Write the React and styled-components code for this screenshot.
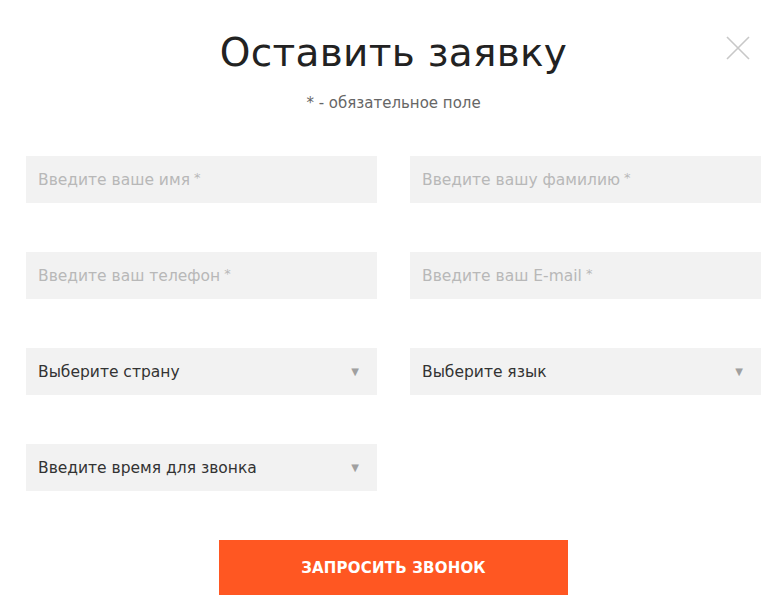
import React from "react";
import styled, { createGlobalStyle } from "styled-components";

const GlobalStyle = createGlobalStyle`
  body {
    margin: 0;
    background: #fff;
    font-family: "DejaVu Sans", "Open Sans", sans-serif;
  }
`;

const Modal = styled.div`
  position: relative;
  width: 784px;
  height: 614px;
  box-sizing: border-box;
  padding: 27px 23px 0 26px;
  display: flex;
  flex-direction: column;
  align-items: center;
`;

const Title = styled.h2`
  margin: 0;
  font-weight: 400;
  font-size: 39px;
  line-height: 52px;
  color: #222;
  letter-spacing: 0.3px;
`;

const Note = styled.p`
  margin: 14px 0 0;
  font-size: 15px;
  line-height: 20px;
  color: #666;
`;

const Close = styled.button`
  position: absolute;
  top: 35px;
  right: 33px;
  width: 26px;
  height: 26px;
  padding: 0;
  border: 0;
  background: none;
  cursor: pointer;
`;

const Grid = styled.div`
  margin-top: 43px;
  width: 100%;
  display: grid;
  grid-template-columns: 351px 351px;
  column-gap: 33px;
  row-gap: 49px;
`;

const Field = styled.div`
  height: 47px;
  background: #f2f2f2;
  display: flex;
  align-items: center;
  justify-content: space-between;
  padding: 0 18px 0 12px;
  box-sizing: border-box;
  font-size: 15.5px;
  color: ${(p) => (p.$select ? "#333" : "#b8b8b8")};
`;

const Star = styled.sup`
  font-size: 13px;
  margin-left: 4px;
  vertical-align: 3px;
`;

const Arrow = styled.span`
  font-size: 10px;
  color: #a0a0a0;
`;

const Submit = styled.button`
  margin-top: 49px;
  width: 349px;
  height: 55px;
  border: 0;
  background: #ff5722;
  color: #fff;
  font-family: inherit;
  font-size: 15px;
  font-weight: 700;
  letter-spacing: 0.2px;
  cursor: pointer;
`;

const inputs = [
  { label: "Введите ваше имя", req: true },
  { label: "Введите вашу фамилию", req: true },
  { label: "Введите ваш телефон", req: true },
  { label: "Введите ваш E-mail", req: true },
  { label: "Выберите страну", select: true },
  { label: "Выберите язык", select: true },
  { label: "Введите время для звонка", select: true },
];

export default function App() {
  return (
    <>
      <GlobalStyle />
      <Modal>
        <Title>Оставить заявку</Title>
        <Note>* - обязательное поле</Note>
        <Close aria-label="close">
          <svg width="26" height="26" viewBox="0 0 26 26">
            <path d="M2 2 L24 24 M24 2 L2 24" stroke="#c8c8c8" strokeWidth="1.6" />
          </svg>
        </Close>
        <Grid>
          {inputs.map((f) => (
            <Field key={f.label} $select={f.select}>
              <span>
                {f.label}
                {f.req && <Star>*</Star>}
              </span>
              {f.select && <Arrow>▼</Arrow>}
            </Field>
          ))}
        </Grid>
        <Submit>ЗАПРОСИТЬ ЗВОНОК</Submit>
      </Modal>
    </>
  );
}
